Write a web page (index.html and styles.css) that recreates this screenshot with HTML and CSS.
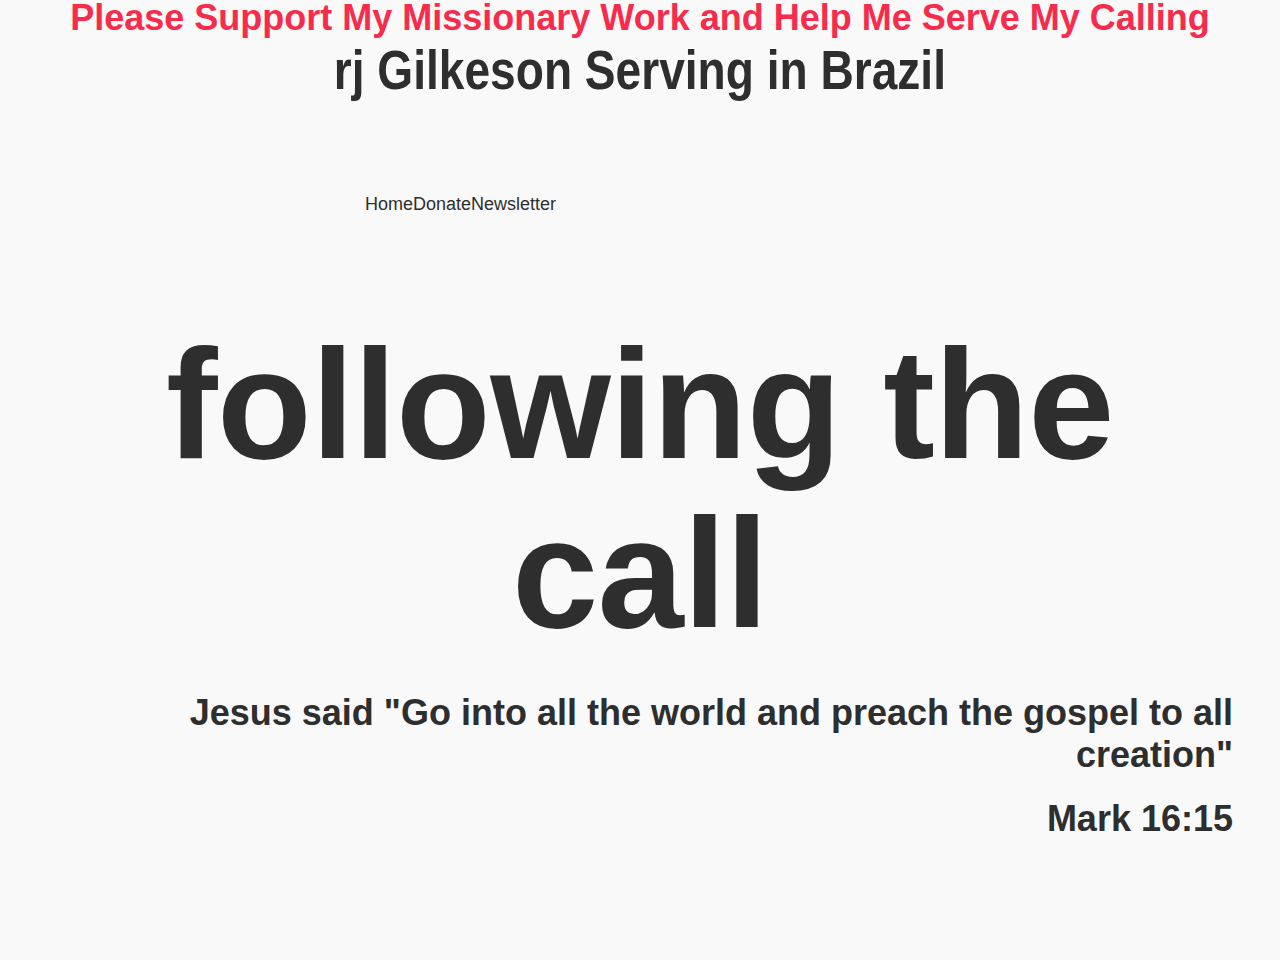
FILE: index.html
```html
<!DOCTYPE html>
<html lang="en">
<head>
<meta charset="utf-8">
<title>rj Gilkeson Serving in Brazil</title>
<link rel="stylesheet" href="styles.css">
</head>
<body>
<header class="site-header">
  <h2 class="support">Please Support My Missionary Work and Help Me Serve My Calling</h2>
  <h1 class="site-title"><span class="site-title-text">rj Gilkeson Serving in Brazil</span></h1>
  <nav class="nav">
    <a href="#">Home</a><a href="#">Donate</a><a href="#">Newsletter</a>
  </nav>
</header>
<main class="hero">
  <h1 class="hero-title">following the call</h1>
  <div class="verse">
    <p class="quote">Jesus said "Go into all the world and preach the gospel to all creation"</p>
    <p class="ref">Mark 16:15</p>
  </div>
</main>
</body>
</html>
```

FILE: styles.css
```css
html, body {
  margin: 0;
  padding: 0;
  background: #f9f9f9;
  color: #2e2e2e;
  font-family: "Liberation Sans", Arial, sans-serif;
}

.site-header {
  display: flex;
  flex-direction: column;
  align-items: center;
}

.support {
  margin: 0;
  font-size: 36px;
  line-height: 36px;
  font-weight: 700;
  color: #f72b4b;
  text-align: center;
}

.site-title {
  margin: 0;
  font-size: 56px;
  line-height: 68px;
  font-weight: 700;
  text-align: center;
}

.site-title-text {
  display: inline-block;
  transform: scaleX(0.823);
  transform-origin: center;
  white-space: nowrap;
}

.nav {
  align-self: flex-start;
  margin: 88px 0 0 365px;
  display: flex;
  font-size: 18px;
  line-height: 24px;
}

.nav a {
  color: #2e2e2e;
  text-decoration: none;
}

.hero {
  padding: 0 47px;
}

.hero-title {
  margin: 104px 0 0;
  font-size: 155px;
  line-height: 169px;
  font-weight: 700;
  letter-spacing: -0.6px;
  text-align: center;
}

.verse {
  margin-top: 34px;
  text-align: right;
}

.quote {
  margin: 0;
  font-size: 36px;
  line-height: 42px;
  font-weight: 700;
  padding-left: 140px;
}

.ref {
  margin: 22px 0 0;
  font-size: 36px;
  line-height: 42px;
  font-weight: 700;
}
```
